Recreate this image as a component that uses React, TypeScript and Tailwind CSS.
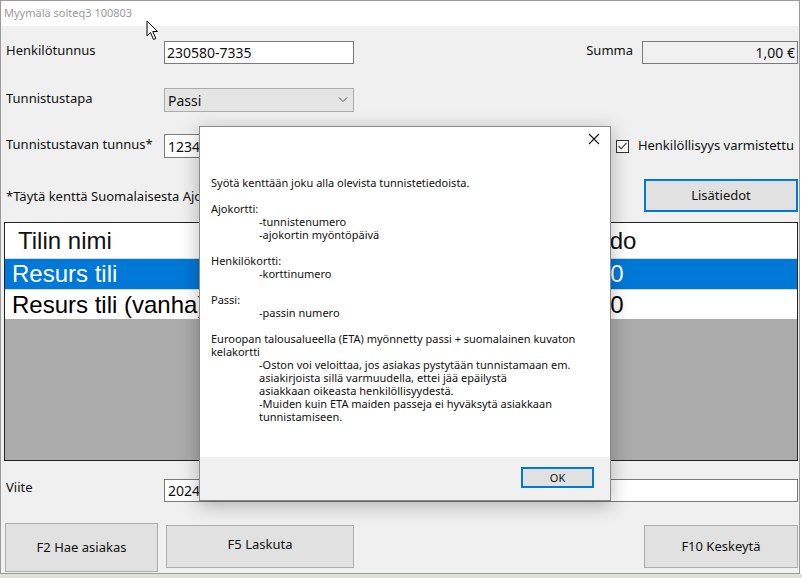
import React from 'react';

const ui = { fontFamily: '"Noto Sans", "DejaVu Sans", sans-serif' };
const arial = { fontFamily: '"Liberation Sans", Arial, sans-serif' };

const accounts = [
  { name: 'Resurs tili', saldo: '0,00', selected: true },
  { name: 'Resurs tili (vanha)', saldo: '0,00', selected: false },
];

const Chevron: React.FC = () => (
  <svg width="10" height="6" viewBox="0 0 10 6" fill="none" stroke="#555" strokeWidth="1">
    <path d="M1 0.5 L5 4.5 L9 0.5" />
  </svg>
);

const Cursor: React.FC = () => (
  <svg width="14" height="22" viewBox="0 0 14 22" className="absolute left-[146px] top-[20px]">
    <path d="M1 1 L1 16 L4.5 12.5 L7.5 19.5 L9.8 18.5 L6.8 11.5 L11.5 11.5 Z" fill="#fff" stroke="#000" strokeWidth="1" strokeLinejoin="round" />
  </svg>
);

const InfoDialog: React.FC = () => {
  const indent = 'pl-[48px]';
  return (
    <div
      className="absolute left-[199px] top-[126px] w-[412px] h-[375px] bg-white border border-[#8a8a8a] shadow-[0_4px_18px_rgba(0,0,0,0.28)] flex flex-col text-[11px] leading-[13px] text-[#111]"
      style={ui}
    >
      <div className="h-[49px] flex justify-end items-start pt-[6px] pr-[10px]">
        <svg width="12" height="12" viewBox="0 0 12 12" stroke="#111" strokeWidth="1.1">
          <path d="M1 1 L11 11 M11 1 L1 11" />
        </svg>
      </div>
      <div className="flex-1 pl-[11px] pr-[8px]">
        <p>Syötä kenttään joku alla olevista tunnistetiedoista.</p>
        <p className="mt-[13px]">Ajokortti:</p>
        <p className={indent}>-tunnistenumero</p>
        <p className={indent}>-ajokortin myöntöpäivä</p>
        <p className="mt-[13px]">Henkilökortti:</p>
        <p className={indent}>-korttinumero</p>
        <p className="mt-[13px]">Passi:</p>
        <p className={indent}>-passin numero</p>
        <p className="mt-[13px]">Euroopan talousalueella (ETA) myönnetty passi + suomalainen kuvaton kelakortti</p>
        <p className={indent}>-Oston voi veloittaa, jos asiakas pystytään tunnistamaan em.</p>
        <p className={indent}>asiakirjoista sillä varmuudella, ettei jää epäilystä</p>
        <p className={indent}>asiakkaan oikeasta henkilöllisyydestä.</p>
        <p className={indent}>-Muiden kuin ETA maiden passeja ei hyväksytä asiakkaan</p>
        <p className={indent}>tunnistamiseen.</p>
      </div>
      <div className="h-[43px] bg-[#f0f0f0] flex justify-end items-start pt-[10px] pr-[16px]">
        <button className="w-[73px] h-[21px] bg-[#e1e1e1] border-2 border-[#0078d7] text-[11px] leading-none">OK</button>
      </div>
    </div>
  );
};

export default function App() {
  return (
    <div className="relative w-[802px] h-[578px] bg-white overflow-hidden text-[13px] text-[#111]" style={ui}>
      <div className="w-[800px] h-[574px] border border-[#9a9a9a] flex flex-col">
        <div className="h-[25px] bg-white flex items-center pl-[3px] text-[11px] text-[#9a9a9a]">
          Myymälä solteq3 100803
        </div>
        <div className="flex-1 bg-[#f0f0f0] pl-[3px] pr-[1px] flex flex-col">
          {/* Henkilötunnus */}
          <div className="mt-[15px] h-[23px] flex items-center">
            <span className="w-[160px] pl-[2px] -mt-[4px] whitespace-nowrap">Henkilötunnus</span>
            <div className="w-[190px] h-[23px] bg-white border border-[#7a7a7a] flex items-center pl-[2px] text-[14px]">230580-7335</div>
            <div className="flex-1" />
            <span className="-mt-[4px]">Summa</span>
            <div className="ml-[9px] w-[156px] h-[23px] border border-[#7a7a7a] bg-[#f0f0f0] flex items-center justify-end pr-[2px] text-[14px]">1,00 €</div>
          </div>

          {/* Tunnistustapa */}
          <div className="mt-[24px] h-[24px] flex items-center">
            <span className="w-[160px] pl-[2px] -mt-[2px] whitespace-nowrap">Tunnistustapa</span>
            <div className="w-[190px] h-[24px] bg-[#e5e5e5] border border-[#acacac] flex items-center justify-between pl-[3px] pr-[5px] text-[14px]">
              <span>Passi</span>
              <Chevron />
            </div>
          </div>

          {/* Tunnistustavan tunnus */}
          <div className="mt-[22px] h-[24px] flex items-center">
            <span className="w-[160px] pl-[2px] -mt-[2px] whitespace-nowrap">Tunnistustavan tunnus*</span>
            <div className="w-[190px] h-[24px] bg-white border border-[#7a7a7a] flex items-center pl-[3px] text-[14px]">12345678</div>
            <div className="flex-1" />
            <div className="w-[13px] h-[13px] border border-[#333] bg-white flex items-center justify-center">
              <svg width="9" height="8" viewBox="0 0 9 8" fill="none" stroke="#333" strokeWidth="1.1">
                <path d="M0.5 4 L3.2 6.8 L8.5 0.8" />
              </svg>
            </div>
            <span className="ml-[9px] mr-[4px] whitespace-nowrap">Henkilöllisyys varmistettu</span>
          </div>

          {/* ohje + Lisätiedot */}
          <div className="mt-[21px] h-[33px] flex items-center">
            <span className="pl-[2px] mt-[2px] whitespace-nowrap">*Täytä kenttä Suomalaisesta Ajokortista</span>
            <div className="flex-1" />
            <button className="w-[154px] h-[33px] bg-[#e1e1e1] border-2 border-[#0078d7] shrink-0">Lisätiedot</button>
          </div>

          {/* Tilit */}
          <div className="mt-[10px] h-[239px] border border-[#222] bg-[#ababab] flex flex-col" style={arial}>
            <div className="h-[36px] bg-white flex items-center text-[24px] border-b border-[#d8d8d8]">
              <span className="w-[570px] pl-[13px]">Tilin nimi</span>
              <span>Saldo</span>
            </div>
            {accounts.map((a) => (
              <div
                key={a.name}
                className={
                  a.selected
                    ? 'h-[30px] bg-[#0078d7] text-white flex items-center text-[24px]'
                    : 'h-[30px] bg-white text-black flex items-center text-[24px] border-t border-[#d8d8d8]'
                }
              >
                <span className="w-[572px] pl-[7px]">{a.name}</span>
                <span>{a.saldo}</span>
              </div>
            ))}
          </div>

          {/* Viite */}
          <div className="mt-[18px] h-[23px] flex items-center">
            <span className="w-[160px] pl-[2px] -mt-[6px]">Viite</span>
            <div className="flex-1 h-[23px] bg-white border border-[#7a7a7a] flex items-center pl-[3px] text-[14px]">20240001234</div>
          </div>

          {/* Painikkeet */}
          <div className="mt-[21px] flex items-start">
            <button className="ml-[1px] w-[153px] h-[49px] bg-[#e1e1e1] border border-[#adadad]">F2 Hae asiakas</button>
            <button className="ml-[8px] mt-[2px] w-[188px] h-[43px] bg-[#e1e1e1] border border-[#adadad] pb-[4px]">F5 Laskuta</button>
            <div className="flex-1" />
            <button className="mt-[2px] w-[154px] h-[43px] bg-[#e1e1e1] border border-[#adadad]">F10 Keskeytä</button>
          </div>
        </div>
      </div>
      <div className="h-[4px] bg-[#dde3d6]" />
      <InfoDialog />
      <Cursor />
    </div>
  );
}
